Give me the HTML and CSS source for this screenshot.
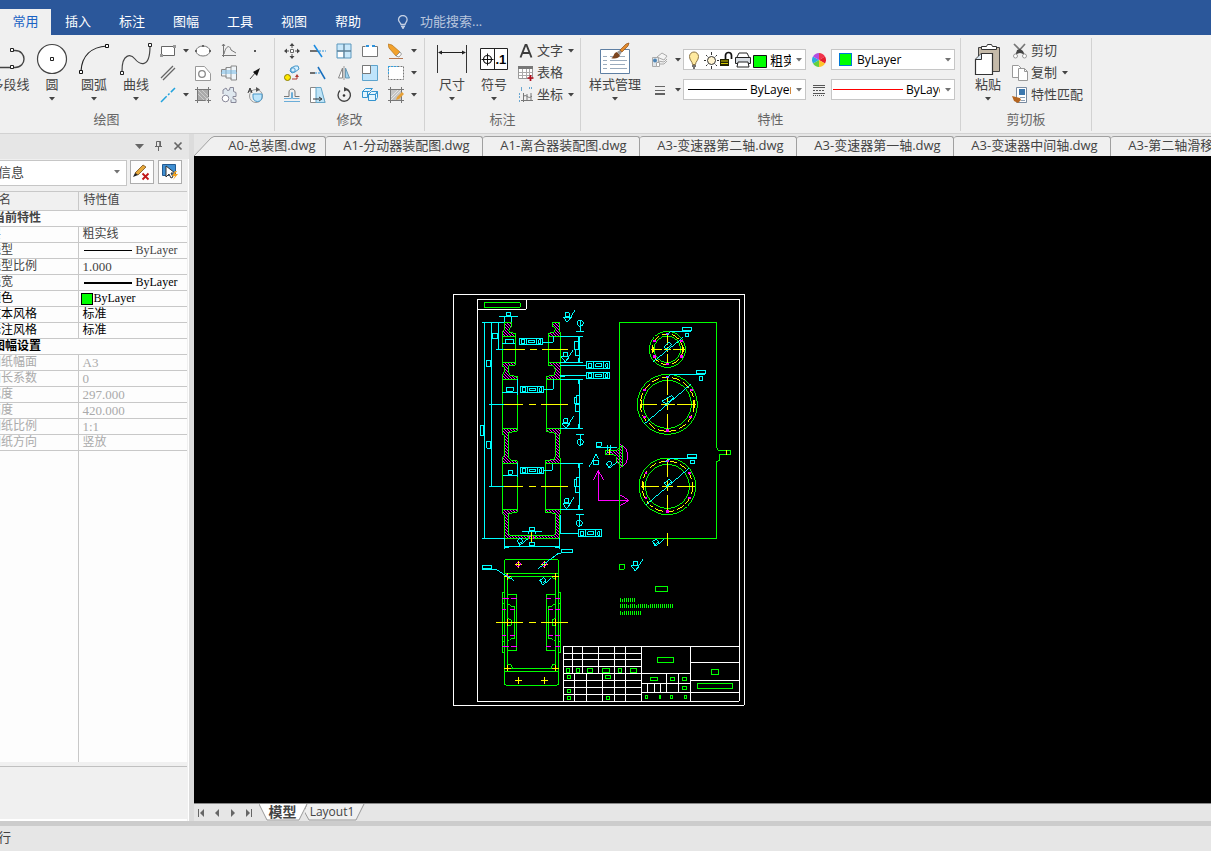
FILE: index.html
```html
<!DOCTYPE html>
<html lang="zh-CN">
<head>
<meta charset="utf-8">
<meta name="viewport" content="width=device-width, initial-scale=1">
<title>CAD</title>
<link rel="stylesheet" href="styles.css">
</head>
<body>
<svg class="defs" aria-hidden="true">
  <symbol id="caret" viewBox="0 0 6 4"><path d="M0 0h6L3 3.5z" fill="#444"/></symbol>
  <symbol id="rough" viewBox="0 0 40 40" overflow="visible"><path d="M6 7h12v12H6zM12 36L0 21h24L12 36L35 0"/></symbol>
  <symbol id="fcf" viewBox="0 0 76 21" overflow="visible"><path d="M0 0h70v20H0zM22 0v20M53 0v20M6 4h10v12H6zM28 6h19v8H28zM58 5h6v11h-6z"/></symbol>
  <symbol id="tilt" viewBox="0 0 40 30" overflow="visible"><path d="M0 8l12-8 7 9-10 8zM3 8l5 14 12-8L34 2"/></symbol>
</svg>

<header class="menubar">
  <nav class="menu" aria-label="功能区">
    <button class="menu-tab is-active">常用</button>
    <button class="menu-tab">插入</button>
    <button class="menu-tab">标注</button>
    <button class="menu-tab">图幅</button>
    <button class="menu-tab">工具</button>
    <button class="menu-tab">视图</button>
    <button class="menu-tab">帮助</button>
  </nav>
  <label class="search">
    <svg width="12" height="14" viewBox="0 0 12 14" fill="none" stroke="#c3cfe3" stroke-width="1.3"><path d="M4 9.5C4 8 1.500 7 1.500 4.800a4.300 4.300 0 0 1 8.600 0C10.100 7 8 8 8 9.500zM4 11.500h4M5 13h2"/></svg>
    <input type="text" placeholder="功能搜索..." aria-label="功能搜索">
  </label>
</header>

<section class="ribbon">
  <div class="group group-draw">
    <div class="group-body">
      <button class="big"><svg class="big-icon" viewBox="0 0 36 36"><path d="M20 9.500h3c12 0 12 17 0 17H0" fill="none" stroke="#444" stroke-width="1.400"/><g fill="#fff" stroke="#222"><path d="M18.500 7.500h3v3h-3zM18.500 24.500h3v3h-3z"/></g></svg><span>多段线</span></button>
      <button class="big"><svg class="big-icon" viewBox="0 0 36 36"><circle cx="18" cy="18" r="14.500" fill="#fff" stroke="#444" stroke-width="1.200"/><path d="M16.500 16.500h3v3h-3z" fill="#fff" stroke="#222"/></svg><span>圆</span><svg class="caret"><use href="#caret"/></svg></button>
      <button class="big"><svg class="big-icon" viewBox="0 0 36 36"><path d="M5 30C6 15 15 6 31 5" fill="none" stroke="#222" stroke-width="1.200"/><g fill="#fff" stroke="#111"><path d="M3.500 29.500h3v3h-3zM29.500 3.500h3v3h-3z"/></g></svg><span>圆弧</span><svg class="caret"><use href="#caret"/></svg></button>
      <button class="big"><svg class="big-icon" viewBox="0 0 36 36"><path d="M4 30C4 12 13 13 17 18s15 11 15-13" fill="none" stroke="#444" stroke-width="1.200"/><g fill="#fff" stroke="#222"><path d="M2.500 30.500h3v3h-3zM30.500 2.500h3v3h-3z"/></g></svg><span>曲线</span><svg class="caret"><use href="#caret"/></svg></button>
      <div class="tools tools-draw">
        <button class="tool" aria-label="矩形"><svg viewBox="0 0 16 16"><path d="M1.500 3.500h13v9h-13z" fill="#fff" stroke="#666"/><path d="M0 11h3v3H0zM13 2h3v3h-3z" fill="#999"/></svg><svg class="caret"><use href="#caret"/></svg></button>
        <button class="tool" aria-label="椭圆"><svg viewBox="0 0 16 16"><ellipse cx="8" cy="8" rx="7" ry="5" fill="#fff" stroke="#777"/><path d="M0 7h2v2H0zM14 7h2v2h-2zM7 2h2v2H7z" fill="#666"/></svg></button>
        <button class="tool" aria-label="公式曲线"><svg viewBox="0 0 16 16" fill="none" stroke="#777"><path d="M2.500 1v13M1 12.500h14M3 11C5 2 9 2 10 7l5 3M1 3l1.500-2L4 3"/></svg></button>
        <button class="tool" aria-label="点"><svg viewBox="0 0 16 16"><path d="M7 7h2v2H7z" fill="#555"/></svg></button>
        <button class="tool" aria-label="平行线"><svg viewBox="0 0 16 16"><path d="M1 13L13 1M3 15L15 3" stroke="#666" stroke-width="1.300"/></svg></button>
        <button class="tool" aria-label="局部放大"><svg viewBox="0 0 16 16"><path d="M.5 15.500V1.500h9l6 7v7z" fill="#fff" stroke="#999"/><circle cx="7" cy="9" r="3.300" fill="none" stroke="#888" stroke-width="1.300"/></svg></button>
        <button class="tool" aria-label="轴"><svg viewBox="0 0 16 16"><path d="M.5 4.500H5v-2h5v-1.500h5.500v14H10v-2H5v-2H.5z" fill="#eef4f8" stroke="#888"/><path d="M5 3v9M10 2v12" stroke="#999"/><path d="M0 8h16M1 6h14" stroke="#72b7e4" fill="none"/></svg></button>
        <button class="tool" aria-label="箭头"><svg viewBox="0 0 16 16"><path d="M3 14l6-7" stroke="#444"/><path d="M13 3L6 7l4 4z" fill="#111"/></svg></button>
        <button class="tool" aria-label="中心线"><svg viewBox="0 0 16 16"><path d="M1 15L15 1" stroke="#22a3dd" stroke-width="1.500" stroke-dasharray="8 2 2 2"/></svg><svg class="caret"><use href="#caret"/></svg></button>
        <button class="tool" aria-label="填充"><svg viewBox="0 0 16 16"><path d="M2.500 2.500h11v11h-11z" fill="#aaa"/><path d="M3 7l6 6M3 3l10 10M7 3l6 6" stroke="#ccc"/><path d="M0 2.500h16M0 13.500h16M2.500 0v16M13.500 0v16" stroke="#777"/><path d="M15 9l-5 6" stroke="#eee"/></svg></button>
        <button class="tool" aria-label="齿形"><svg viewBox="0 0 16 16" fill="#dfe8ef" stroke="#889"><path d="M2 7V3l3-2 1.500 2.500L8.500 3 9 .5h3.500v4l2.500 1v4h-3v2l3 1v3h-5v-3"/><circle cx="4.500" cy="11.500" r="3.300" fill="#fff"/></svg></button>
        <button class="tool" aria-label="孔"><svg viewBox="0 0 16 16"><circle cx="9" cy="9" r="6.500" fill="none" stroke="#999"/><path d="M6 7h9v3c0 6-9 6-9 0z" fill="#bde5fb" stroke="#4a98c8"/><path d="M1 6l2-5 2 5M2 4h3" fill="none" stroke="#333"/><path d="M9 0l4 2.500L9 5z" fill="#555"/></svg></button>
      </div>
    </div>
    <h2 class="group-title">绘图</h2>
  </div>

  <div class="group group-edit">
    <div class="group-body">
      <div class="tools tools-edit">
        <button class="tool" aria-label="平移"><svg viewBox="0 0 16 16"><path d="M6.500 6.500h3v3h-3z" fill="#fff" stroke="#666"/><path d="M8 0l2.500 3h-5zM8 16l2.500-3h-5zM0 8l3-2.500v5zM16 8l-3-2.500v5z" fill="#444"/><path d="M3 8h2M11 8h2M8 3v2M8 11v2" stroke="#555"/></svg></button>
        <button class="tool" aria-label="裁剪"><svg viewBox="0 0 16 16" fill="none"><path d="M0 8h8" stroke="#444" stroke-width="1.500"/><path d="M4 2l8 12" stroke="#1c8be0" stroke-width="1.500"/><path d="M9 8h7" stroke="#2a93dd" stroke-dasharray="2 1"/></svg></button>
        <button class="tool" aria-label="阵列"><svg viewBox="0 0 16 16"><path d="M1 1h14v14H1z" fill="#c9e8fb" stroke="#5d98bd"/><path d="M8 1v14M1 8h14" stroke="#5d7f95" stroke-width="1.300"/><path d="M2 9h5v5H2z" fill="#fff"/></svg></button>
        <button class="tool" aria-label="打断"><svg viewBox="0 0 16 16"><path d="M3.500 3.500h-3v10h15v-10h-3" fill="#fff" stroke="#777"/><path d="M5 3.500h7" stroke="#fff"/><path d="M4 2h3v2H4zM10 2h3v2h-3z" fill="#2d93de"/></svg></button>
        <button class="tool" aria-label="删除"><svg viewBox="0 0 16 16"><path d="M0 1l4 1 8 7-4 4-7-8z" fill="#f2a22d" stroke="#b3731b" stroke-width=".7"/><path d="M8 13l4-4 1.500 2-2.500 3z" fill="#fff" stroke="#777" stroke-width=".7"/><path d="M1 15.500h14" stroke="#b5764f"/></svg><svg class="caret"><use href="#caret"/></svg></button>
        <button class="tool" aria-label="平移复制"><svg viewBox="0 0 16 16"><circle cx="3.500" cy="12.500" r="3" fill="#ffe800" stroke="#8a7e00"/><path d="M7 3l4-2h3l1 3-4 3-3 1-2-2z" fill="#d8f0ff" stroke="#4597ca"/><circle cx="9" cy="5" r="2.200" fill="#d8f0ff" stroke="#4597ca"/><path d="M8 14h5v-3" fill="none" stroke="#b2382f"/><path d="M13 9l2 3h-4z" fill="#b2382f"/></svg></button>
        <button class="tool" aria-label="延伸"><svg viewBox="0 0 16 16"><path d="M0 8h5" stroke="#444" stroke-width="1.500"/><path d="M5 8h6" stroke="#2a93dd" stroke-dasharray="2 1"/><path d="M8 2l7 12" stroke="#176fbe" stroke-width="1.500"/></svg></button>
        <button class="tool" aria-label="镜像"><svg viewBox="0 0 16 16"><path d="M6.500 3v10h-4z" fill="#fff" stroke="#888"/><path d="M9.500 3v10h4z" fill="#9ed2ef" stroke="#6b9ab5"/><path d="M8 1v14" stroke="#999"/></svg></button>
        <button class="tool" aria-label="缩放"><svg viewBox="0 0 16 16"><path d="M.5.5h15v15H.5z" fill="#bfe4fb" stroke="#5da3cc"/><path d="M.5.5h8v8h-8z" fill="#fff" stroke="#777"/></svg></button>
        <button class="tool" aria-label="拉伸"><svg viewBox="0 0 16 16"><path d="M.5 1.500h15v13H.5z" fill="#fff" stroke="#777" stroke-dasharray="2 1"/><path d="M.5 1v9M0 1.500h10" stroke="#35a0df" stroke-dasharray="2 1"/></svg><svg class="caret"><use href="#caret"/></svg></button>
        <button class="tool" aria-label="等距线"><svg viewBox="0 0 16 16" fill="none"><path d="M0 9.500h5V5c0-4 6-4 6 0v4.500h4.500" stroke="#777"/><path d="M0 11.500h7.500V6c0-1 1-1 1 0v5.500h7" stroke="#6badd8"/><path d="M0 14.500h16" stroke="#6badd8"/></svg></button>
        <button class="tool" aria-label="倒角"><svg viewBox="0 0 16 16"><path d="M.5.5H10l5 15H.5z" fill="#fff" stroke="#888"/><path d="M6 .500h5l4 15H6z" fill="#bfe4f7" stroke="#65a6c9"/><path d="M3 12h8M9 10l3 2-3 2" stroke="#333" fill="none"/></svg></button>
        <button class="tool" aria-label="旋转"><svg viewBox="0 0 16 16"><path d="M4 3.500A6.200 6.200 0 1 0 11 2.500" fill="none" stroke="#444" stroke-width="1.400"/><path d="M8 0l5 2.500-5 2z" fill="#444"/><circle cx="8" cy="8.500" r="1.300" fill="#333"/></svg></button>
        <button class="tool" aria-label="分解"><svg viewBox="0 0 16 16" fill="#e4f5fe" stroke="#3494cf"><path d="M.5 4.500l3-3h7l-3 3zM.5 4.500h5v6h-5zM6.500 7.500l3-3h6l-2 3zM6.500 7.500h7v6h-7zM13.500 7.500l2-3v6l-2 3"/></svg></button>
        <button class="tool" aria-label="块编辑"><svg viewBox="0 0 16 16"><path d="M2.500 2.500h11v11h-11z" fill="#c4c4c4"/><path d="M3 10l7-7M3 13L13 3" stroke="#e4e4e4"/><path d="M0 2.500h16M0 13.500h16M2.500 0v16M13.500 0v16" stroke="#777"/><path d="M8 13l1-3 5-5 2 2-5 5z" fill="#e6a037"/></svg><svg class="caret"><use href="#caret"/></svg></button>
      </div>
    </div>
    <h2 class="group-title">修改</h2>
  </div>

  <div class="group group-note">
    <div class="group-body">
      <button class="big"><svg class="big-icon" viewBox="0 0 36 36"><path d="M3.500 4v28M32.500 4v28" stroke="#333"/><path d="M5 11.500h26" stroke="#222"/><path d="M4 11.500l4-2v4zM32 11.500l-4-2v4z" fill="#222"/></svg><span>尺寸</span><svg class="caret"><use href="#caret"/></svg></button>
      <button class="big"><svg class="big-icon" viewBox="0 0 36 36"><path d="M4.500 7.500h27v21h-27zM18.500 7.500v21" fill="#fff" stroke="#222"/><circle cx="11.500" cy="18.500" r="4" fill="none" stroke="#111" stroke-width="1.200"/><path d="M5.500 18.500h12M11.500 12.500v12" stroke="#111"/><text x="19.500" y="23" class="tolerance">.1</text></svg><span>符号</span><svg class="caret"><use href="#caret"/></svg></button>
      <div class="list">
        <button class="item"><svg viewBox="0 0 16 16"><path d="M2.500 14.500L7.500 2h1l5 12.500M4.500 10h7" fill="none" stroke="#3c3c3c" stroke-width="1.900"/></svg><span>文字</span><svg class="caret"><use href="#caret"/></svg></button>
        <button class="item"><svg viewBox="0 0 16 16"><path d="M.5 1.500h14v12H.5z" fill="#fff" stroke="#999"/><path d="M0 1h15v3H0z" fill="#777"/><path d="M1 7.500h13M1 10.500h13M4.500 4v9M8.500 4v9M11.500 4v9" stroke="#aaa"/><path d="M9.500 13h6M12.500 10v6" stroke="#b0101e" stroke-width="1.700"/></svg><span>表格</span></button>
        <button class="item"><svg viewBox="0 0 16 16" fill="none"><path d="M5.500 6v9M3 13.500h12M6 9c3-2 4 4 8 0M9 7v7M13 6v8" stroke="#777"/><path d="M3 1h2M3 3h2M11 1h3M1 7h2M1 10h2M1 14h2" stroke="#3d8ec7" stroke-width="1.500" stroke-dasharray="1 1"/></svg><span>坐标</span><svg class="caret"><use href="#caret"/></svg></button>
      </div>
    </div>
    <h2 class="group-title">标注</h2>
  </div>

  <div class="group group-props">
    <div class="group-body">
      <button class="big big-wide"><svg class="big-icon" viewBox="0 0 36 36"><path d="M3.500 8.500h29v24h-29z" fill="#fff" stroke="#5e7fa3"/><path d="M6 15.500h4M6 19.500h4M6 23.500h4M6 27.500h4M13 15.500h15M13 19.500h17M13 23.500h15M13 27.500h17" stroke="#9aabbd"/><path d="M14 17c3 0 2-5 6-6l3 3c-1 4-6 4-9 3z" fill="#7c4620"/><path d="M20 11l3-2 2 2-2 3z" fill="#999"/><path d="M23 9l6-6 3-1-1 3-6 6z" fill="#e28a2d" stroke="#8c4d18" stroke-width=".7"/></svg><span>样式管理</span><svg class="caret"><use href="#caret"/></svg></button>
      <div class="props">
        <button class="tool prop-tool" aria-label="图层"><svg viewBox="0 0 16 16" fill="#f4f4f4" stroke="#aaa"><path d="M5 5l5-4 5 3-3 4zM6 9l6 1 3-3M7 12h5l3-3"/><path d="M.5 5.500h6v9h-6z" fill="#e1e6ea"/><circle cx="3" cy="8.500" r="2" fill="#4d84b5" stroke="none"/><path d="M4.500 10.500h3v4h-3z" fill="#fff"/></svg><svg class="caret"><use href="#caret"/></svg></button>
        <div class="combo combo-layer">
          <svg class="layer-icons" width="80" height="18" viewBox="0 0 80 18"><path d="M4.500 13.500c0-3-3-4-3-8a4.500 4.500 0 0 1 9 0c0 4-3 5-3 8z" fill="#ffeaa0" stroke="#8d7546"/><path d="M4 15h4M5 17h2" stroke="#444" stroke-width="1.500"/><circle cx="23.500" cy="9.500" r="4" fill="#fff3cf" stroke="#333"/><path d="M23.500 1v3M23.500 15v3M16 9.500h2M29 9.500h2M18 4l1.500 1.500M29 4l-1.500 1.500M18 15l1.500-1.500M29 15l-1.500-1.500" stroke="#333"/><path d="M32 8h9v7h-9z" fill="#222200"/><path d="M33 10h7M33 12.500h7" stroke="#d4c900"/><path d="M37.500 8V4.500a3 3 0 0 1 6 0V8" fill="none" stroke="#111" stroke-width="1.700"/><path d="M49 6l2-4h8l2 4" fill="#fff" stroke="#222"/><path d="M47.500 6.500h15v6h-15z" fill="#d7dce2" stroke="#222"/><path d="M50 11h10l1 5H49z" fill="#fff" stroke="#222"/><path d="M65.500 4.500h13v12h-13z" fill="#0f0" stroke="#111"/></svg>
          <select aria-label="图层"><option>粗实线层</option></select><svg class="caret"><use href="#caret"/></svg>
        </div>
        <svg class="prop-icon" viewBox="0 0 14 14"><path d="M7 7V0a7 7 0 0 1 6 3.500z" fill="#f0324a"/><path d="M7 7l6-3.500a7 7 0 0 1 0 7z" fill="#e51c2d"/><path d="M7 7l6 3.500A7 7 0 0 1 7 14z" fill="#ffc42a"/><path d="M7 7v7a7 7 0 0 1-6-3.500z" fill="#65d13e"/><path d="M7 7l-6 3.500a7 7 0 0 1 0-7z" fill="#2ba8e0"/><path d="M7 7L1 3.500A7 7 0 0 1 7 0z" fill="#b44de0"/></svg>
        <div class="combo combo-color"><span class="swatch"></span><select aria-label="颜色"><option>ByLayer</option></select><svg class="caret"><use href="#caret"/></svg></div>
        <button class="tool prop-tool" aria-label="线宽"><svg viewBox="0 0 16 16"><path d="M3 4.500h10M3 8.500h10" stroke="#666"/><path d="M3 12h10" stroke="#333" stroke-width="1.500"/></svg><svg class="caret"><use href="#caret"/></svg></button>
        <div class="combo combo-line"><span class="line"></span><select aria-label="线型"><option>ByLayer</option></select><svg class="caret"><use href="#caret"/></svg></div>
        <svg class="prop-icon" viewBox="0 0 14 14" stroke="#555"><path d="M1 2.500h12M1 4.500h12M1 10.500h12"/><path d="M1 7.500h12" stroke-dasharray="2 1"/><path d="M1 12.500h12" stroke-dasharray="1 1"/></svg>
        <div class="combo combo-red"><span class="line red"></span><select aria-label="线宽值"><option>ByLayer</option></select><svg class="caret"><use href="#caret"/></svg></div>
      </div>
    </div>
    <h2 class="group-title">特性</h2>
  </div>

  <div class="group group-clip">
    <div class="group-body">
      <button class="big"><svg class="big-icon" viewBox="0 0 36 36"><path d="M8.500 6.500h21v24h-21z" fill="#c5baa9" stroke="#444"/><path d="M11.500 8.500v-3h5l1-2h4l1 2h4v3z" fill="#fff" stroke="#333"/><path d="M5.500 18.500l6-6h11v21h-17z" fill="#fff" stroke="#333" stroke-width="1.200"/><path d="M5.500 18.500h6v-6" fill="#dce8f2" stroke="#333"/></svg><span>粘贴</span><svg class="caret"><use href="#caret"/></svg></button>
      <div class="list list-clip">
        <button class="item"><svg viewBox="0 0 16 16"><path d="M2 1l10 10M13 1L4 11" stroke="#777" stroke-width="1.700"/><path d="M5 7l3-1 3 2 1 3-4-1-4 1z" fill="#444"/><circle cx="3.500" cy="13" r="2" fill="#fff" stroke="#999"/><circle cx="12.500" cy="13" r="2" fill="#fff" stroke="#999"/></svg><span>剪切</span></button>
        <button class="item"><svg viewBox="0 0 16 16" fill="#fff" stroke="#999"><path d="M.5.5h6l3 3v9h-9z"/><path d="M6.500 3.500h6l3 3v9h-9z"/><path d="M12.500 3.500v3h3" fill="none"/></svg><span>复制</span><svg class="caret"><use href="#caret"/></svg></button>
        <button class="item"><svg viewBox="0 0 16 16"><path d="M4.500.5h10v15h-10z" fill="#fff" stroke="#788aa0"/><path d="M7 2h6v6H7z" fill="#3c78ae"/><path d="M8 10.500h5M9 13.500h4" stroke="#8c9fb3"/><path d="M0 9l4 1 4 1 1 2-3 3-4-2z" fill="#b5651f"/></svg><span>特性匹配</span></button>
      </div>
    </div>
    <h2 class="group-title">剪切板</h2>
  </div>
</section>

<main class="workspace">
  <aside class="panel">
    <div class="panel-head">
      <button aria-label="菜单"><svg width="10" height="10" viewBox="0 0 10 10"><path d="M0 3h9L4.500 8z" fill="#666"/></svg></button>
      <button aria-label="固定"><svg width="10" height="10" viewBox="0 0 10 10" fill="none" stroke="#666"><path d="M2.500 5.500v-5h4v5M1 5.500h7M4.500 6v4"/><path d="M6 .500v5" stroke-width="1.500"/></svg></button>
      <button aria-label="关闭"><svg width="10" height="10" viewBox="0 0 10 10"><path d="M1.500 1.500l7 7M8.500 1.500l-7 7" stroke="#666" stroke-width="1.700"/></svg></button>
    </div>
    <div class="panel-filter">
      <div class="combo combo-filter"><select aria-label="对象"><option>全局信息</option></select><svg class="caret"><use href="#caret"/></svg></div>
      <button class="square" aria-label="清除"><svg width="18" height="18" viewBox="0 0 18 18"><path d="M2 10l8-8 3 2-8 8z" fill="#e6a83a" stroke="#77501e" stroke-width=".8"/><path d="M0 14l2-4 3 2z" fill="#222"/><path d="M9.500 10.500l6 6M15.500 10.500l-6 6" stroke="#c11717" stroke-width="1.800"/></svg></button>
      <button class="square" aria-label="快速选择"><svg width="18" height="18" viewBox="0 0 18 18"><path d="M1.500 1.500h13v11h-13z" fill="#3f8fd2" stroke="#235a91"/><path d="M5 3v11l3-3 2 4 2-1-2-4h4z" fill="#fff" stroke="#333"/><path d="M14 8l-3 5h3l-2 4 5-6h-3l2-3z" fill="#f5a21b"/></svg></button>
    </div>
    <div class="grid-wrap">
      <table class="grid">
        <thead><tr><th>特性名</th><th>特性值</th></tr></thead>
        <tbody>
          <tr class="section"><th colspan="2">当前特性</th></tr>
          <tr><td>层</td><td>粗实线</td></tr>
          <tr><td>线型</td><td class="by"><span class="sample"></span>ByLayer</td></tr>
          <tr><td>线型比例</td><td class="num">1.000</td></tr>
          <tr><td>线宽</td><td class="by dark"><span class="sample thick"></span>ByLayer</td></tr>
          <tr class="dark"><td>颜色</td><td class="by color"><span class="chip"></span>ByLayer</td></tr>
          <tr class="dark"><td>文本风格</td><td>标准</td></tr>
          <tr class="dark"><td>标注风格</td><td>标准</td></tr>
          <tr class="section dark"><th colspan="2">图幅设置</th></tr>
          <tr class="muted"><td>图纸幅面</td><td class="num">A3</td></tr>
          <tr class="muted"><td>加长系数</td><td class="num">0</td></tr>
          <tr class="muted"><td>宽度</td><td class="num">297.000</td></tr>
          <tr class="muted"><td>高度</td><td class="num">420.000</td></tr>
          <tr class="muted"><td>图纸比例</td><td class="num">1:1</td></tr>
          <tr class="muted"><td>图纸方向</td><td>竖放</td></tr>
        </tbody>
      </table>
      <div class="grid-rest"></div>
    </div>
    <div class="panel-note"></div>
  </aside>

  <section class="editor">
    <div class="doc-tabs">
      <svg class="slant" viewBox="0 0 20 20"><path d="M0 20L17 2l3-1.500V20z" fill="#f0f0f0"/><path d="M0 20L17 2l3-1.500" fill="none" stroke="#a0a0a0"/></svg>
      <button class="doc-tab doc-first">A0-总装图.dwg</button>
      <button class="doc-tab">A1-分动器装配图.dwg</button>
      <button class="doc-tab">A1-离合器装配图.dwg</button>
      <button class="doc-tab">A3-变速器第二轴.dwg</button>
      <button class="doc-tab">A3-变速器第一轴.dwg</button>
      <button class="doc-tab">A3-变速器中间轴.dwg</button>
      <button class="doc-tab">A3-第二轴滑移套.dwg</button>
    </div>

    <svg class="drawing" viewBox="194 156 1017 647" role="img" aria-label="A3 图纸">
      <defs>
        <pattern id="hatch" width="9" height="9" patternUnits="userSpaceOnUse"><path d="M-3 -3L12 12M-3 6L3 12M6 -3L12 3" stroke="#f0f" stroke-width="3" fill="none"/></pattern>
      </defs>
      <g transform="translate(450 290) scale(.33333)">
        <path class="w" d="M10 13h873v1233H10zM82 28h786v1206H82zM82 58h147V28"/>
        <path class="g" d="M103 38h108v14H103z"/>
        <path class="g h" d="M163 97h21v12l-9 13 5 6 16 2v9h-39v-14l8-7zM307 97h21v23l3 8v11h-36v-9l18-3 3-12-9-7zM157 217h39v9l-19 2-2 17 7 12 20 2v9h-45v-13l6-10v-13l-6-4zM295 217h36v51h-42v-9l24-3 3-16-6-12-15-2z"/>
        <path class="g" d="M157 139v78M196 139v78M295 139v78M331 139v78M157 268v147M202 314v101M289 268v147M331 268v147"/>
        <path class="c" d="M103 97v648M124 97v492M145 97v81M97 97h66M138 178h27M118 343h45M129 130h15v16h-15zM111 211h12v19h-12zM91 406h11v30H91zM169 67h13v10h-13zM148 79h55M163 79v18M185 79v18M157 160h39M166 159v-11h25v11M202 268v46M169 292h21v12h-21zM157 307h45M278 157h32v-20M280 298h30v-30M331 226h78M331 257h78M331 259h14M331 139h68M331 217h68M331 268h68M331 415h68M390 139v78M390 268v147M387 139v15M387 205v12M387 268v14M387 402v13M373 154h14v24h-14zM376 178h12v18h-12zM379 316h10v26h-10zM373 322h6v20h-6zM376 343h12v22h-12zM391 91v33M379 124h23"/>
        <circle class="c" cx="391" cy="100" r="9"/>
        <use class="c" href="#fcf" x="208" y="145" width="76" height="21"/><use class="c" href="#fcf" x="211" y="289" width="76" height="21"/><use class="c" href="#fcf" x="409" y="216" width="76" height="21"/><use class="c" href="#fcf" x="409" y="247" width="76" height="21"/>
        <use class="c" href="#rough" x="340" y="61" width="40" height="40"/><use class="c" href="#rough" x="334" y="180" width="40" height="40"/><use class="c" href="#rough" x="336" y="379" width="40" height="40"/>
        <path class="y" d="M163 178h62M240 178h21M276 178h78M163 343h56M237 343h21M273 343h81"/>
      </g>
      <g transform="translate(450 420) scale(.33333)">
        <path class="g h" d="M157 25h45v9l-25 3-2 73 7 10 20 2v8h-45v-17l6-5V45l-6-3zM289 25h42v15l-3 5v65l3 5v15h-45v-9l26-2 4-9V40l-27-6zM157 268h45v9l-25 3-2 63 6 3h131l4-6v-60l-30-3v-9h45v12l-3 10v65H163v-70l-6-5z"/>
        <path class="g" d="M157 130v138M202 172v96M286 130v138M331 130v138M235 346v12M256 346v12M157 0v25M202 0v25M289 0v25M331 0v25"/>
        <path class="m" d="M239 348v10M250 348v10"/>
        <path class="c" d="M111 64h12v21h-12zM118 199h45M202 130v42M175 151h12v12h-12zM159 166h42M280 151h27v-20M331 25h68M390 0v25M378 43h24M391 43v33M331 130h68M390 130v138M387 130v14M387 255v13M331 268h68M379 172h10v27h-10zM373 178h6v21h-6zM376 199h12v20h-12zM378 283h24M388 283v36M331 285v55h54M238 322h16v10h-16zM216 334h60M235 334v8M256 334v8M238 367h16v9h-16zM97 355h66M163 379h165M163 355v32M328 355v32M164 382h12M316 382h12M334 388h34v10h-34zM334 399l-12 4-20 15M439 67h15v12h-15zM439 82h63M473 75v25M481 75v25M430 121h16v12h-16zM418 140l20-37 8 15"/>
        <circle class="c" cx="391" cy="67" r="9"/><circle class="c" cx="388" cy="310" r="9"/>
        <use class="c" href="#fcf" x="211" y="142" width="76" height="21"/><use class="c" href="#fcf" x="385" y="330" width="76" height="21"/>
        <use class="c" href="#rough" x="338" y="230" width="40" height="40"/>
        <use class="c" href="#tilt" x="200" y="354" width="40" height="30"/><use class="c" href="#tilt" x="468" y="123" width="40" height="30"/>
        <path class="y" d="M163 199h56M237 199h21M273 199h81M244 337v28"/>
        <path class="m" d="M445 241v-90M430 180l15-29 15 29M445 241h92M511 225l26 16-26 16M508 73c34 10 34 60 0 70"/>
        <path class="g h" d="M466 92h34l8-8 9-8v65l-9-8-9-8v-15l-8-7h-25z"/>
        <path class="y" d="M478 88v18"/>
      </g>
      <g transform="translate(590 290) scale(.33333)">
        <path class="g" d="M88 97h292v378h3v6h39v12h-32v18l-10 3v231H88zM88 823h15v15H88z"/>
        <g class="g"><circle cx="232" cy="178" r="54"/><circle cx="232" cy="178" r="40"/><circle cx="232" cy="343" r="90"/><circle cx="232" cy="343" r="72"/><circle cx="232" cy="589" r="85"/><circle cx="232" cy="589" r="66"/></g>
        <g class="y" stroke-dasharray="24 9"><circle cx="232" cy="178" r="46"/><circle cx="232" cy="343" r="81"/><circle cx="232" cy="589" r="76"/></g>
        <path class="y" d="M183 178h34M223 178h19M248 178h38M232 130v34M232 170v16M232 192v34M151 343h49M212 343h42M262 343h56M232 259v56M232 325v36M232 372v52M153 589h54M217 589h32M261 589h54M232 508v54M232 574v30M232 615v54M155 330v24M160 577v24M312 330v24M307 577v24M190 170v16M280 170v16M409 481v15M232 730v38"/>
        <path class="m dot" d="M232 132h1M194 154h1M274 154h1M194 200h1M274 200h1M232 223h1M232 262h1M164 301h1M304 301h1M164 382h1M302 382h1M232 422h1M232 513h1M168 550h1M299 550h1M168 625h1M299 625h1M232 665h1"/>
        <path class="c" d="M190 215l90-73M163 402l139-119M169 644l129-110M228 136l15-12h60M277 112h28v10h-28zM286 130h10v9h-10zM228 265l15-12h101M319 241h28v10h-28zM328 259h10v12h-10zM226 516l16-11h78M292 493h28v10h-28zM301 511h12v10h-12zM222 172l16-16 7 7-14 14zM217 333l28-17 6 8-24 18zM222 580l16-12 7 8-14 12z"/>
        <use class="c" href="#tilt" x="187" y="747" width="40" height="30"/><use class="c" href="#rough" x="124" y="807" width="40" height="40"/>
      </g>
      <g transform="translate(450 550) scale(.33333)">
        <rect class="g" x="163" y="28" width="163" height="378" rx="8"/>
        <path class="g" d="M163 70h163M163 364h163M172 79v276M316 79v276M184 79h123M184 355h123M172 85h10l5-6M316 85h-7l-5-6M172 343h10l7 12M316 343h-8l-6 12M163 127h-6v180h6M172 133h28v168h-28M157 160h6M157 274h6M172 163h6l6 6h10v96h-10l-6 6h-6M326 127h6v180h-6M316 133h-27v168h27M316 163h-5l-6 6h-10v96h10l6 6h5M172 205l12 5v15l-12 4M316 205l-9 5v15l9 4M326 160h6M326 274h6"/>
        <path class="y" d="M138 217h81M237 217h21M273 217h81M172 208v20M316 208v20M195 391h21M205 381v21M273 391h21M283 381v21M195 43h21M205 33v21M273 43h21M283 33v21M163 79h19M172 70v19M306 79h21M316 70v19M163 355h19M172 345v19M306 355h21M316 345v19"/>
        <path class="m" d="M157 145h19M184 145h16M289 145h15M316 145h15M157 178h11M180 178h16M295 178h14M316 178h15M157 256h11M180 256h16M295 256h14M316 256h15M157 289h19M184 289h16M289 289h15M316 289h15M197 43l8-8 8 8-8 8zM275 43l8-8 8 8-8 8zM170 73l10 10"/>
        <path class="c" d="M97 46h28v10H97M97 46v12h41l53 33M325 10l-61 46"/>
        <use class="c" href="#tilt" x="269" y="83" width="40" height="30"/>
      </g>
      <g transform="translate(555 580) scale(.33333)">
        <path class="w" d="M25 199h528M25 199v165M25 220h234M25 238h234M25 259h234M25 280h381M25 301h234M25 322h234M25 343h234M52 199v81M82 199v81M130 199v81M178 199v165M211 199v165M58 280v84M94 280v84M142 280v84M259 199v165M406 199v165M259 310h147M259 337h294M406 247h147M406 301h147M334 280v57M370 280v57M277 310v27M298 310v27M316 310v27"/>
        <path class="g" d="M34 265h11v13H34zM64 265h10v13H64zM99 265h14v13H99zM142 265h22v13h-22zM190 265h10v13h-10zM226 265h19v13h-19zM37 286h10v10H37zM151 286h16v10h-16zM37 328h10v10H37zM37 349h10v10H37zM154 349h10v10h-10zM307 232h49v16h-49zM286 292h22v10h-22zM346 292h13v10h-13zM382 292h13v10h-13zM382 319h13v10h-13zM469 268h22v16h-22zM427 310h106v16H427zM271 346h7v10h-7zM313 346h3v10h-3zM346 346h7v10h-7zM388 346h7v10h-7zM301 19h37v16h-37z"/>
        <path class="ticks" d="M195 60h46M195 79h163M195 99h66"/>
        <path class="gaps" d="M198 55h6M240 55h3M216 74h6M228 74h3M243 74h6M279 74h3M330 74h3M354 74h5M198 94h6M258 94h4"/>
      </g>
    </svg>

    <div class="sheets">
      <div class="sheet-nav">
        <button aria-label="首页"><svg viewBox="0 0 8 8"><path d="M1.500 0v8" stroke="#666"/><path d="M7 0v8L3 4z" fill="#666"/></svg></button>
        <button aria-label="上一页"><svg viewBox="0 0 8 8"><path d="M6 0v8L2 4z" fill="#666"/></svg></button>
        <button aria-label="下一页"><svg viewBox="0 0 8 8"><path d="M2 0v8l4-4z" fill="#666"/></svg></button>
        <button aria-label="末页"><svg viewBox="0 0 8 8"><path d="M6.500 0v8" stroke="#666"/><path d="M1 0v8l4-4z" fill="#666"/></svg></button>
      </div>
      <button class="sheet is-current"><svg viewBox="0 0 48 17" preserveAspectRatio="none"><path d="M0 0l8 16h32L48 0" fill="#fff" stroke="#999"/></svg><span>模型</span></button>
      <button class="sheet"><svg viewBox="0 0 60 17" preserveAspectRatio="none"><path d="M2 0L-1 7l5 9h47L59 0" fill="#f0f0f0" stroke="#999"/></svg><span>Layout1</span></button>
    </div>
  </section>
</main>

<footer class="status"><span>命令执行</span></footer>
</body>
</html>
```
FILE: styles.css
```css
* { box-sizing: border-box; }

body {
  margin: 0;
  min-height: 100vh;
  display: flex;
  flex-direction: column;
  overflow-x: hidden;
  background: #e6e6e6;
  color: #444;
  font: 13px/16px "Open Sans", "Noto Sans CJK SC", sans-serif;
}

button, select, input { font: inherit; color: inherit; }
button { margin: 0; padding: 0; border: 0; background: none; white-space: nowrap; }
svg { display: block; flex: none; }
.defs { position: absolute; width: 0; height: 0; }
.caret { width: 6px; height: 4px; }

/* Menu bar */
.menubar { display: flex; height: 35px; padding-top: 9px; background: #2b579a; color: #fff; }
.menu { display: flex; }
.menu-tab { width: 54px; padding-bottom: 3px; }
.menu-tab.is-active { width: 51px; background: #f0f0f0; color: #1a62c4; }
.search { display: flex; align-items: center; gap: 11px; margin-left: 22px; color: #b9c6dd; }
.search input { width: 120px; padding: 0 0 3px; border: 0; background: none; outline: 0; }
.search input::placeholder { color: #b9c6dd; opacity: 1; }

/* Ribbon */
.ribbon { display: flex; height: 99px; padding-top: 3px; background: #f0f0f0; border-bottom: 1px solid #d2d2d2; }
.group { display: flex; flex-direction: column; flex: none; height: 93px; border-right: 1px solid #d2d2d2; }
.group-draw { width: 275px; }
.group-edit { width: 150px; }
.group-note { width: 156px; }
.group-props { width: 380px; }
.group-clip { width: 131px; }
.group-body { display: flex; height: 73px; }
.group-draw .group-body { margin-left: -11px; }
.group-edit .group-body { padding-left: 4px; }
.group-note .group-body { padding-left: 6px; }
.group-props .group-body { padding-left: 4px; }
.group-clip .group-body { padding-left: 6px; }
.group-title { margin: 0; text-align: center; font-weight: 400; font-size: 13px; color: #666; }
.group-draw .group-title { padding-right: 61px; }

.big { display: flex; flex-direction: column; align-items: center; width: 42px; padding-top: 3px; }
.big-wide { width: 60px; }
.big-icon { width: 36px; height: 36px; }
.big span { margin-top: -1px; }
.big .caret { margin-top: 5px; }
.tolerance { font: bold 13px "Liberation Sans", sans-serif; fill: #000; }

.tools { display: grid; grid-auto-rows: 22px; padding-top: 2px; }
.tools-draw { grid-template-columns: 33px 26px 26px 26px; }
.tools-edit { grid-template-columns: repeat(4, 26px) 40px; }
.tool { display: flex; align-items: center; gap: 7px; padding-left: 5px; }
.tools-draw .tool:nth-child(4n + 1) { padding-left: 3px; }
.tool svg:first-child { width: 16px; height: 16px; }

.list { display: grid; grid-auto-rows: 22px; padding: 2px 0 0 3px; }
.item { display: flex; align-items: center; gap: 3px; }
.item svg:first-child { width: 16px; height: 16px; }
.item span { padding-bottom: 2px; }
.item .caret { margin-left: 2px; }

.props { display: grid; grid-template-columns: 38px 123px 25px 124px; grid-auto-rows: 21px; row-gap: 9px; padding-top: 11px; }
.prop-tool { padding-left: 7px; }
.prop-icon { width: 14px; height: 14px; place-self: center; }
.combo { display: flex; align-items: center; min-width: 0; height: 21px; padding: 0 3px 0 4px; background: #fff; border: 1px solid #c6c6c6; color: #000; font-size: 12px; }
.combo select { appearance: none; flex: 1; min-width: 0; padding: 0; border: 0; background: none; outline: 0; text-overflow: clip; }
.combo .caret { margin-left: 5px; opacity: .75; }
.combo-layer select { margin-left: 2px; font-size: 13px; }
.swatch { width: 13px; height: 13px; margin: 0 5px 0 3px; background: #0f0; border: 1px solid #0078d7; }
.line { flex: none; width: 59px; margin-right: 3px; border-top: 1px solid #000; }
.combo-red { padding-left: 1px; }
.line.red { width: 70px; border-top-color: #f00; }

/* Workspace */
.workspace { display: flex; flex: 1; min-height: 0; }
.panel { display: flex; flex-direction: column; flex: none; width: 194px; background: #f0f0f0; border-right: 5px solid #dcdcdc; box-shadow: inset -1px 0 #fff; }
.panel-head { display: flex; justify-content: flex-end; gap: 9px; height: 25px; padding: 7px 6px 0 0; background: #e6e6e6; }
.panel-head button { width: 10px; height: 10px; }
.panel-filter { display: flex; gap: 3px; padding: 1px 7px 0 0; height: 30px; }
.combo-filter { height: 26px; margin-left: -33px; flex: 1; padding-right: 6px; padding-bottom: 2px; color: #444; font-size: 13px; }
.square { display: grid; place-items: center; width: 24px; height: 24px; background: #fdfdfd; border: 1px solid #adadad; }
.square + .square { margin-left: 1px; }

.grid-wrap { display: flex; flex-direction: column; flex: 1; margin: 2px 2px 4px 0; overflow: hidden; background: #fdfdfd; border-top: 1px solid #c8c8c8; }
.grid { width: calc(100% + 14px); margin-left: -13px; border-collapse: collapse; table-layout: fixed; font: 12px/15px "Liberation Serif", "Noto Sans CJK SC", serif; }
.grid th, .grid td { height: 16px; padding: 0 0 0 2px; border-bottom: 1px solid #c8c8c8; text-align: left; font-weight: 400; white-space: nowrap; line-height: 15px; }
.grid th:first-child, .grid td:first-child { width: 91px; border-right: 1px solid #c8c8c8; }
.grid thead th { height: 18px; padding-left: 5px; background: #f0f0f0; }
.grid thead th:first-child { text-indent: -17px; }
.grid .section th { padding-left: 6px; border-right: 0; font-weight: 700; }
.grid td + td { padding-left: 4px; }
.grid .dark { color: #000; }
.grid .muted { color: #aaa; }
.grid .num { font-size: 13px; }
.sample { display: inline-block; width: 48px; margin: 0 4px 0 1px; vertical-align: middle; border-top: 1px solid #000; }
.sample.thick { border-top-width: 2px; }
.grid .color { padding-left: 2px; }
.chip { display: inline-block; width: 12px; height: 12px; margin-right: 1px; vertical-align: middle; background: #0f0; border: 1px solid #000; }
.grid-rest { flex: 1; width: 79px; border-right: 1px solid #c8c8c8; }
.panel-note { height: 55px; margin-right: 2px; border-top: 1px solid #c0c0c0; border-bottom: 2px solid #fff; }

.editor { display: flex; flex-direction: column; flex: 1; min-width: 0; }
.doc-tabs { display: flex; height: 22px; padding-top: 2px; overflow: hidden; }
.slant { width: 20px; height: 20px; }
.doc-tab { flex: none; width: 157px; padding: 0 0 3px 5px; overflow: hidden; background: #f0f0f0; border-top: 1px solid #a0a0a0; border-right: 1px solid #a0a0a0; border-radius: 3px 3px 0 0; }
.doc-first { width: 112px; border-top-left-radius: 0; }
.drawing { flex: 1; width: 100%; min-height: 0; height: 0; background: #000; shape-rendering: crispEdges; }
.drawing g, .drawing path, .drawing circle, .drawing rect, .drawing use { fill: none; }
.drawing .h { fill: url(#hatch); }
.w, .g, .c, .y, .m { stroke-width: 3; }
.w { stroke: #fff; }
.g { stroke: #0f0; }
.c { stroke: #0ff; }
.y { stroke: #ff0; }
.m { stroke: #f0f; }
.drawing .dot { stroke-width: 7; stroke-linecap: square; }
.ticks { stroke: #0f0; stroke-width: 13; stroke-dasharray: 3 3; }
.gaps { stroke: #000; stroke-width: 5; }

.sheets { display: flex; height: 18px; padding-left: 1px; border-top: 1px solid #888; }
.sheet-nav { display: flex; gap: 4px; width: 64px; }
.sheet-nav button { display: grid; place-items: center; width: 12px; }
.sheet-nav svg { width: 8px; height: 8px; }
.sheet { position: relative; width: 60px; margin-left: -2px; padding: 0 6px 3px 0; font-size: 12px; }
.sheet svg { position: absolute; inset: 0; width: 100%; height: 100%; }
.sheet span { position: relative; }
.sheet.is-current { z-index: 1; width: 48px; margin-left: 0; padding-right: 1px; font-size: 14px; font-weight: 700; }

.status { height: 30px; padding-top: 3px; border-top: 5px solid #ccc; overflow: hidden; }
.status span { display: block; margin-left: -41px; }
```
